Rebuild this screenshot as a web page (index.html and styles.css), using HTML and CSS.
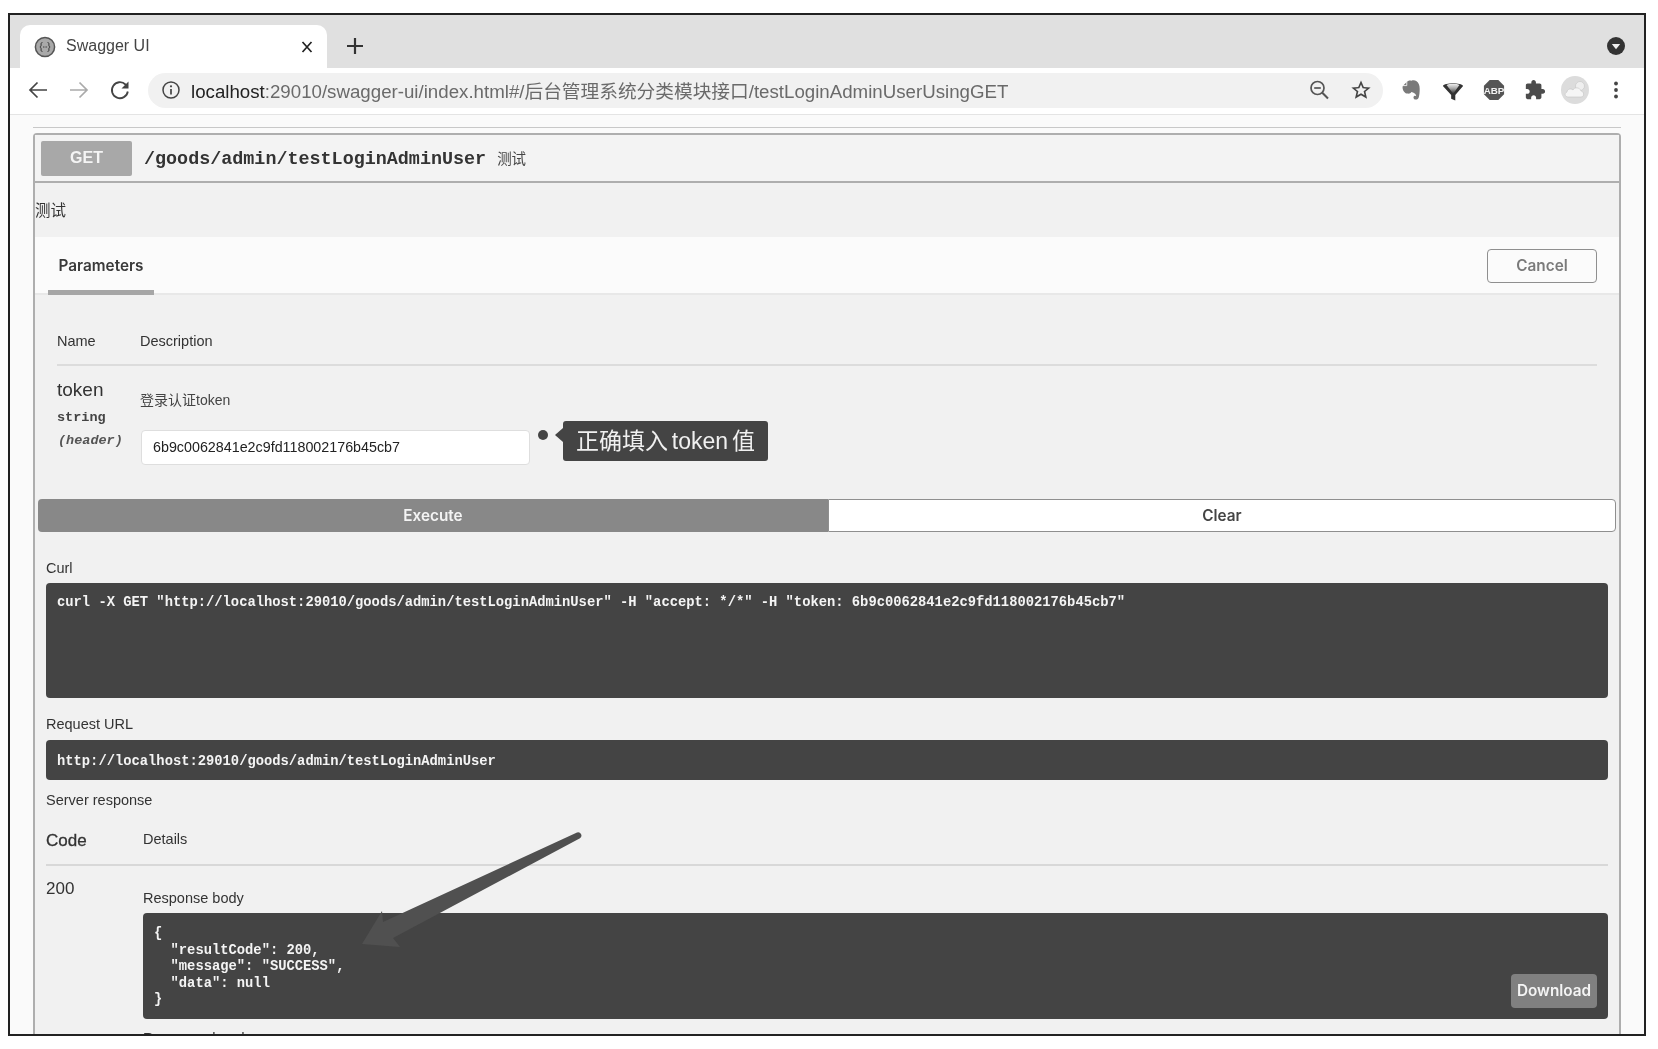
FILE: index.html
```html
<!DOCTYPE html>
<html lang="zh">
<head>
<meta charset="utf-8">
<title>Swagger UI</title>
<link rel="stylesheet" href="styles.css">
</head>
<body>
<div class="frame">
  <div class="tabstrip">
    <div class="tab">
      <svg class="favicon" viewBox="0 0 22 22"><circle cx="11" cy="11" r="9.6" fill="#a9a9a9" stroke="#555" stroke-width="1.5"/><path d="M8.4 6.5c-1.5 0-1.3 1.2-1.3 2.6 0 1.2-.5 1.7-1.2 1.900.7.2 1.2.7 1.2 1.900 0 1.400-.2 2.600 1.300 2.600M13.600 6.500c1.500 0 1.300 1.200 1.300 2.600 0 1.200.5 1.700 1.200 1.900-.7.2-1.200.7-1.200 1.900 0 1.400.2 2.600-1.300 2.600" fill="none" stroke="#333" stroke-width="1"/><path d="M9 11h.9M10.600 11h.9M12.200 11h.9" stroke="#333" stroke-width="1"/></svg>
      <span class="tab-title">Swagger UI</span>
      <svg class="tab-close" viewBox="0 0 12 14"><path d="M1.500 2l9 10M10.500 2l-9 10" stroke="#222" stroke-width="1.700" fill="none"/></svg>
    </div>
    <svg class="tab-new" viewBox="0 0 16 16"><path d="M8 0v16M0 8h16" stroke="#333" stroke-width="2.200" fill="none"/></svg>
    <svg class="tab-menu" viewBox="0 0 18 18"><circle cx="9" cy="9" r="9" fill="#333"/><path d="M4.800 7h8.400L9 12.200z" fill="#eee"/></svg>
  </div>
  <div class="toolbar">
    <svg class="nav-icon" viewBox="0 0 24 24"><path d="M21 12H4M11.500 4.500L4 12l7.500 7.500" fill="none" stroke="#444" stroke-width="1.700"/></svg>
    <svg class="nav-icon dim" viewBox="0 0 24 24"><path d="M3 12h17M12.500 4.500L20 12l-7.500 7.500" fill="none" stroke="#aaa" stroke-width="1.700"/></svg>
    <svg class="nav-icon" viewBox="0 0 24 24"><path d="M19.800 13.500a8 8 0 1 1-2.300-7L19.500 8.500" fill="none" stroke="#444" stroke-width="1.800"/><path d="M20.500 3.500v7h-7z" fill="#444"/></svg>
    <div class="omnibox">
      <svg class="info" viewBox="0 0 20 20"><circle cx="10" cy="10" r="8" fill="none" stroke="#444" stroke-width="1.500"/><path d="M10 9v5.500" stroke="#444" stroke-width="1.700"/><circle cx="10" cy="6.300" r="1.100" fill="#444"/></svg>
      <span class="url"><span class="host">localhost</span>:29010/swagger-ui/index.html#/后台管理系统分类模块接口/testLoginAdminUserUsingGET</span>
      <svg class="omni-icon" viewBox="0 0 22 22"><circle cx="9.500" cy="9" r="6.500" fill="none" stroke="#555" stroke-width="1.700"/><path d="M14.300 13.800L20 19.500" stroke="#555" stroke-width="2"/><path d="M6.200 9h6.600" stroke="#555" stroke-width="1.700"/></svg>
      <svg class="omni-icon" viewBox="0 0 24 24"><path d="M22.500 9.240l-7.400-.62L12 1.500 8.900 8.630 1.500 9.240l5.660 4.730L5.400 21.500 12 17.600l6.600 3.900-1.760-7.530L22.500 9.240zM12 15.500l-3.900 2.350 1.050-4.450-3.450-2.900 4.550-.38L12 5.900l1.750 4.220 4.550.38-3.450 2.900 1.050 4.450L12 15.500z" fill="#444"/></svg>
    </div>
    <div class="extensions">
      <svg class="ext" viewBox="0 0 24 24"><path d="M6 3.500C7.700 1.800 9.600 1.300 11.500 2c1.500-.9 3.900-.6 5.500.5 2.200 1.500 3.400 4.300 3.400 8.200 0 3.300-.2 6.500-1 9.200-.5 1.700-1.700 2.600-3.300 2.500-1.600-.1-2.500-1-2.500-2.300 0-1.100.8-1.800 1.800-1.800.6 0 1 .2 1.200.5-.1-1.200-.7-2.300-1.600-3-1.100-.8-2.600-.9-3.700-1.500-.8 1.300-2.200 1.900-4 1.600C4.300 16 2 12.900 1.700 9.500c-.1-.9.100-1.700.7-2.300z" fill="#7a7a7a"/><path d="M6.300 2.800v4.400H2" fill="none" stroke="#f4f4f4" stroke-width="1"/></svg>
      <svg class="ext" viewBox="0 0 24 24"><defs><linearGradient id="fun" x1="0" y1="0" x2="0" y2="1"><stop offset="0" stop-color="#f0f0f0"/><stop offset="0.45" stop-color="#aaa"/><stop offset="1" stop-color="#333"/></linearGradient></defs><path d="M1 7.500C3 3.500 21 3.500 23 7.500L14.500 17.500V23.500L10 21.500V17.500z" fill="#333"/><path d="M5 6.500C7.500 4.800 16.500 4.800 19 6.500L12.200 16z" fill="url(#fun)"/></svg>
      <svg class="ext" viewBox="0 0 24 24"><path d="M7.300 1h9.400L23 7.300v9.400L16.700 23H7.300L1 16.700V7.300z" fill="#555"/><text x="12" y="16" class="abp-text">ABP</text></svg>
      <svg class="ext" viewBox="0 0 24 24"><path d="M20.500 11H19V7c0-1.100-.9-2-2-2h-4V3.500C13 2.120 11.880 1 10.500 1S8 2.120 8 3.500V5H4c-1.100 0-1.990.9-1.990 2v3.800H3.500c1.490 0 2.700 1.210 2.700 2.700s-1.210 2.700-2.700 2.700H2V20c0 1.100.9 2 2 2h3.800v-1.500c0-1.490 1.210-2.700 2.700-2.700 1.490 0 2.700 1.210 2.700 2.700V22H17c1.100 0 2-.9 2-2v-4h1.500c1.380 0 2.500-1.120 2.500-2.500S21.880 11 20.500 11z" fill="#4c4c4c"/></svg>
      <svg class="avatar" viewBox="0 0 28 28"><circle cx="14" cy="14" r="14" fill="#dcdcdc"/><circle cx="19" cy="10" r="4.500" fill="#efefef" stroke="#c4c4c4" stroke-width=".6"/><path d="M7 21c-3.200 0-4-4-1-5 0-3 4-4 6-2 1-3 7-3 8 1 3 0 4 6 0 6z" fill="#f5f5f5" stroke="#c4c4c4" stroke-width=".6"/></svg>
      <svg class="dots" viewBox="0 0 6 18"><circle cx="3" cy="2.500" r="1.900" fill="#444"/><circle cx="3" cy="9" r="1.900" fill="#444"/><circle cx="3" cy="15.500" r="1.900" fill="#444"/></svg>
    </div>
  </div>
  <div class="viewport">
    <div class="top-rule"></div>
    <section class="opblock">
      <header class="summary">
        <span class="method">GET</span>
        <span class="path">/goods/admin/testLoginAdminUser</span>
        <span class="summary-desc">测试</span>
      </header>
      <div class="op-desc">测试</div>
      <div class="params-head">
        <span class="params-tab">Parameters</span>
        <button class="cancel">Cancel</button>
      </div>
      <div class="params-body">
        <div class="param-cols"><span class="col-name">Name</span><span>Description</span></div>
        <div class="param-row">
          <div class="param-meta">
            <div class="param-name">token</div>
            <div class="param-type">string</div>
            <div class="param-in">(header)</div>
          </div>
          <div class="param-desc">
            <div class="param-label">登录认证token</div>
            <div class="param-input-line">
              <div class="param-input">6b9c0062841e2c9fd118002176b45cb7</div>
              <span class="note-dot"></span>
              <span class="note">正确填入 token 值</span>
            </div>
          </div>
        </div>
        <div class="exec-row">
          <div class="btn-exec">Execute</div>
          <div class="btn-clear">Clear</div>
        </div>
        <div class="responses">
          <div class="label label-curl">Curl</div>
          <pre class="code code-curl">curl -X GET "http://localhost:29010/goods/admin/testLoginAdminUser" -H "accept: */*" -H "token: 6b9c0062841e2c9fd118002176b45cb7"</pre>
          <div class="label label-url">Request URL</div>
          <pre class="code code-url">http://localhost:29010/goods/admin/testLoginAdminUser</pre>
          <div class="label label-server">Server response</div>
          <div class="resp-cols"><span class="col-code">Code</span><span class="col-details">Details</span></div>
          <div class="resp-row">
            <div class="resp-code">200</div>
            <div class="resp-detail">
              <div class="label label-body">Response body</div>
              <div class="code code-body">
<pre class="json">{
  "resultCode": 200,
  "message": "SUCCESS",
  "data": null
}</pre>
                <span class="download">Download</span>
              </div>
              <div class="label label-headers">Response headers</div>
            </div>
          </div>
        </div>
      </div>
    </section>
  </div>
  <svg class="arrow" viewBox="0 0 240 130"><path d="M2 123L22 90l1 11L217 11.500a3.300 3.300 0 0 1 3 5.800L33 117l7 9z" fill="#505050"/></svg>
</div>
</body>
</html>
```
FILE: styles.css
```css
* { box-sizing: border-box; }
html, body { margin: 0; height: 100%; background: #fff; }
body {
  width: 1658px;
  height: 1049px;
  overflow: hidden;
  padding: 13px 0 0 8px;
  font-family: "Liberation Sans", "Noto Sans CJK SC", sans-serif;
  color: #3b3b3b;
}
.frame {
  position: relative;
  width: 1638px;
  height: 1023px;
  border: 2px solid #222;
  background: #fafafa;
  overflow: hidden;
  display: flex;
  flex-direction: column;
  filter: blur(0.3px);
}

/* tabs */
.tabstrip {
  height: 53px;
  flex: none;
  background: #e0e0e0;
  padding: 10px 19px 0 10px;
  display: flex;
  align-items: flex-start;
}
.tab {
  width: 307px;
  height: 43px;
  background: #fff;
  border-radius: 10px 10px 0 0;
  display: flex;
  align-items: center;
  padding: 0 14px 0 14px;
}
.favicon { width: 22px; height: 22px; flex: none; }
.tab-title { margin-left: 10px; padding-bottom: 2px; font-size: 16px; color: #444; flex: 1; }
.tab-close { width: 12px; height: 14px; flex: none; }
.tab-new { width: 16px; height: 16px; margin: 13px 0 0 20px; flex: none; }
.tab-menu { width: 18px; height: 18px; margin: 12px 0 0 auto; flex: none; }

/* toolbar */
.toolbar {
  height: 47px;
  flex: none;
  background: #fff;
  border-bottom: 1px solid #e4e4e4;
  display: flex;
  align-items: center;
  padding: 0 18px 2px 16px;
}
.nav-icon { width: 24px; height: 24px; flex: none; margin-right: 17px; }
.omnibox {
  width: 1235px;
  height: 35px;
  margin-left: -1px;
  background: #f1f1f1;
  border-radius: 18px;
  display: flex;
  align-items: center;
  padding: 0 11px 0 13px;
}
.info { width: 20px; height: 20px; flex: none; }
.url {
  margin-left: 10px;
  padding-bottom: 2px;
  font-size: 18.700px;
  color: #6a6a6a;
  flex: 1;
  white-space: nowrap;
}
.host { color: #222; }
.omni-icon { width: 22px; height: 22px; flex: none; margin-left: 20px; }
.extensions {
  flex: 1;
  display: flex;
  align-items: center;
  gap: 19px;
  margin-left: 18px;
}
.ext { width: 22px; height: 22px; flex: none; }
.abp-text { font: bold 10.700px "Liberation Sans", sans-serif; fill: #f2f2f2; text-anchor: middle; }
.avatar { width: 28px; height: 28px; flex: none; margin: 0 -3px 0 -4px; }
.dots { width: 6px; height: 18px; flex: none; margin-left: 8px; }

/* page */
.viewport { flex: 1; padding: 12px 23px 0; overflow: hidden; }
.top-rule { height: 1px; background: #c8c8c8; }
.opblock {
  margin-top: 5px;
  border: 2px solid #aeaeae;
  border-bottom: 0;
  border-radius: 4px 4px 0 0;
  background: #f1f1f1;
}
.summary {
  height: 48px;
  border-bottom: 2px solid #aeaeae;
  display: flex;
  align-items: center;
  padding: 0 0 0 6px;
  background: #f3f3f3;
}
.method {
  width: 91px;
  height: 35px;
  background: #a8a8a8;
  border-radius: 2px;
  color: #f4f4f4;
  font-size: 16px;
  font-weight: bold;
  display: flex;
  align-items: center;
  justify-content: center;
}
.path {
  margin: 2px 0 0 12px;
  font: bold 18.400px "Liberation Mono", monospace;
  color: #333;
}
.summary-desc { margin: 0 0 2px 11px; font-size: 14.500px; color: #444; font-family: "Noto Sans CJK SC", sans-serif; }
.op-desc {
  height: 54px;
  padding-top: 15px;
  font-size: 15.500px;
  line-height: 22px;
  color: #333;
  font-family: "Noto Sans CJK SC", sans-serif;
}
.params-head {
  height: 58px;
  background: #fbfbfb;
  border-bottom: 2px solid #e8e8e8;
  display: flex;
  justify-content: space-between;
  padding: 12px 22px 0 13px;
  position: relative;
}
.params-tab {
  width: 106px;
  height: 46px;
  margin-bottom: -2px;
  border-bottom: 5px solid #a6a6a6;
  text-align: center;
  font: 600 15.300px/34px Inter, sans-serif;
  color: #3a3a3a;
}
.cancel {
  width: 110px;
  height: 34px;
  background: transparent;
  border: 1.500px solid #8f8f8f;
  border-radius: 4px;
  font: 600 15.300px Inter, sans-serif;
  color: #7a7a7a;
  padding: 0 0 2px;
}
.param-cols {
  height: 71px;
  margin: 0 22px;
  padding-top: 34px;
  border-bottom: 2px solid #dcdcdc;
  font-size: 14.500px;
  line-height: 24px;
  display: flex;
  color: #333;
}
.col-name { width: 83px; }
.param-row {
  height: 133px;
  margin-left: 22px;
  display: flex;
}
.param-meta { width: 83px; padding-top: 12px; flex: none; }
.param-name { font-size: 19px; line-height: 24px; color: #333; }
.param-type { font: bold 13.500px/18px "Liberation Mono", monospace; margin-top: 7px; color: #444; }
.param-in { font: italic bold 13.500px/18px "Liberation Mono", monospace; margin: 5px 0 0 1px; color: #555; white-space: nowrap; }
.param-desc { flex: 1; padding-top: 23px; }
.param-label { font-size: 14px; line-height: 22px; color: #444; }
.param-input-line { display: flex; align-items: flex-start; margin-top: 19px; position: relative; }
.param-input {
  width: 389px;
  height: 35px;
  margin-left: 1px;
  background: #fff;
  border: 1px solid #dedede;
  border-radius: 4px;
  padding-left: 11px;
  font-size: 14.300px;
  line-height: 33px;
  color: #222;
}
.note-dot {
  width: 10px;
  height: 10px;
  margin: 0 0 0 8px;
  border-radius: 50%;
  background: #444;
}
.note {
  position: absolute;
  left: 423px;
  top: -9px;
  height: 40px;
  width: 205px;
  background: #444;
  border-radius: 3px;
  color: #f0f0f0;
  font-size: 23px;
  word-spacing: -2.500px;
  line-height: 40px;
  text-align: center;
  white-space: nowrap;
}
.note::before {
  content: "";
  position: absolute;
  left: -8px;
  top: 7px;
  border: 7px solid transparent;
  border-left: 0;
  border-right: 8px solid #444;
}
.exec-row {
  height: 33px;
  margin: 0 3px 0 3px;
  display: flex;
  font: 600 15.300px/33px Inter, sans-serif;
  text-align: center;
}
.btn-exec {
  width: 790px;
  background: #888;
  color: #f4f4f4;
  border-radius: 4px 0 0 4px;
}
.btn-clear {
  flex: 1;
  background: #fff;
  border: 1px solid #8f8f8f;
  border-radius: 0 4px 4px 0;
  line-height: 31px;
  color: #444;
}
.responses { margin: 0 11px; }
.label { font-size: 14.500px; line-height: 20px; color: #333; }
.label-curl { margin-top: 26px; }
.code {
  margin: 0;
  background: #444;
  border-radius: 4px;
  color: #f4f4f4;
  font: bold 13.800px/17px "Liberation Mono", monospace;
  padding: 0 11px;
}
.code-curl { height: 115px; margin-top: 5px; padding-top: 11px; }
.label-url { margin-top: 16px; }
.code-url { height: 40px; margin-top: 6px; line-height: 43px; }
.label-server { margin-top: 10px; }
.resp-cols {
  height: 56px;
  padding-top: 20px;
  border-bottom: 2px solid #d8d8d8;
  display: flex;
  line-height: 20px;
}
.col-code { width: 97px; padding-top: 1px; font-size: 17px; color: #333; -webkit-text-stroke: 0.3px #333; }
.col-details { margin-top: -1px; font-size: 14.500px; color: #333; }
.resp-row { display: flex; }
.resp-code { width: 97px; font-size: 17px; line-height: 20px; margin-top: 13px; color: #333; flex: none; }
.resp-detail { flex: 1; }
.label-body { margin-top: 22px; }
.code-body { position: relative; height: 106px; margin-top: 5px; }
.json { margin: 0; padding-top: 13px; font: inherit; line-height: 16.500px; }
.download {
  position: absolute;
  right: 11px;
  bottom: 11px;
  width: 86px;
  height: 34px;
  background: #808080;
  border-radius: 4px;
  font: 600 15.300px/34px Inter, sans-serif;
  text-align: center;
  color: #f4f4f4;
}
.label-headers { margin-top: 9px; }
.arrow {
  position: absolute;
  left: 350px;
  top: 806px;
  width: 240px;
  height: 130px;
}
```
